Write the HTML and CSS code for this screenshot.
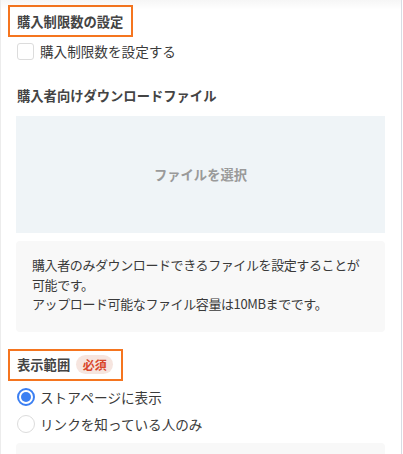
FILE: index.html
```html
<!DOCTYPE html>
<html lang="ja">
<head>
<meta charset="utf-8">
<link rel="stylesheet" href="styles.css">
</head>
<body>
<div class="panel">
  <section class="sec">
    <h2 class="hl">購入制限数の設定</h2>
    <label class="check"><span class="cbox"></span><span>購入制限数を設定する</span></label>
  </section>
  <section class="sec">
    <h2 class="title">購入者向けダウンロードファイル</h2>
    <div class="drop">ファイルを選択</div>
    <div class="note">
      <p>購入者のみダウンロードできるファイルを設定することが<br>可能です。</p>
      <p>アップロード可能なファイル容量は10MBまでです。</p>
    </div>
  </section>
  <section class="sec">
    <h2 class="hl hl-req">表示範囲<span class="badge">必須</span></h2>
    <label class="radio"><span class="rdot on"></span><span>ストアページに表示</span></label>
    <label class="radio radio-2"><span class="rdot"></span><span>リンクを知っている人のみ</span></label>
    <div class="note stub"></div>
  </section>
</div>
</body>
</html>
```

FILE: styles.css
```css
html, body {
  margin: 0;
  padding: 0;
  background: #fff;
}
body {
  font-family: "Noto Sans CJK JP", "Noto Sans", sans-serif;
  color: #3a3a3a;
  width: 403px;
  height: 454px;
  overflow: hidden;
}
.panel {
  position: relative;
  width: 402px;
  height: 454px;
  box-sizing: border-box;
  border-left: 1px solid #ececec;
  border-right: 1px solid #d8dce4;
  padding: 5px 0 0 7px;
  overflow: hidden;
}
.panel::before {
  content: "";
  position: absolute;
  left: 0;
  right: 0;
  top: 0;
  height: 10px;
  background: linear-gradient(rgba(0,0,0,0.035), rgba(0,0,0,0));
}
.sec { margin: 0; }
.hl {
  display: inline-flex;
  align-items: center;
  margin: 0;
  height: 32px;
  box-sizing: border-box;
  border: 2px solid #f5751f;
  padding: 0 8px 0 7px;
  font-size: 13.3px;
  font-weight: 700;
  color: #444;
}
.hl-req {
  margin-top: 17px;
  gap: 6px;
}
.badge {
  display: inline-flex;
  align-items: center;
  justify-content: center;
  width: 37px;
  height: 19px;
  border-radius: 10px;
  background: #f6e5df;
  color: #d9462a;
  font-size: 12px;
  font-weight: 700;
}
.check {
  display: flex;
  align-items: center;
  gap: 6px;
  height: 22px;
  margin: 3px 0 0 9px;
  font-size: 13.6px;
}
.cbox {
  width: 15px;
  height: 15px;
  border: 1px solid #dcdcdc;
  border-radius: 3px;
  background: #fff;
}
.title {
  margin: 24px 0 0 9px;
  height: 20px;
  line-height: 20px;
  font-size: 13.3px;
  font-weight: 700;
  color: #444;
}
.drop {
  margin: 10px 0 0 8px;
  width: 369px;
  height: 117px;
  background: #eff4f7;
  display: flex;
  align-items: center;
  justify-content: center;
  font-size: 13.3px;
  font-weight: 700;
  color: #9a9a9a;
}
.note {
  margin: 8px 0 0 8px;
  width: 369px;
  box-sizing: border-box;
  padding: 14px 16px 18px;
  background: #f8f8f8;
  border-radius: 4px;
  font-size: 13px;
  line-height: 19.5px;
  color: #3a3a3a;
}
.note p {
  margin: 0;
  white-space: nowrap;
  letter-spacing: -0.4px;
}
.radio {
  display: flex;
  align-items: center;
  gap: 5px;
  height: 24px;
  margin: 4px 0 0 9px;
  font-size: 13.6px;
}
.radio-2 { margin-top: 3px; }
.rdot {
  width: 16px;
  height: 16px;
  border-radius: 50%;
  border: 1px solid #dcdcdc;
  background: #fff;
  display: flex;
  align-items: center;
  justify-content: center;
}
.rdot.on {
  border: 2px solid #3b7ff2;
  width: 14px;
  height: 14px;
}
.rdot.on::after {
  content: "";
  width: 10px;
  height: 10px;
  border-radius: 50%;
  background: #3b7ff2;
}
.stub {
  margin-top: 7px;
  height: 40px;
}
```
